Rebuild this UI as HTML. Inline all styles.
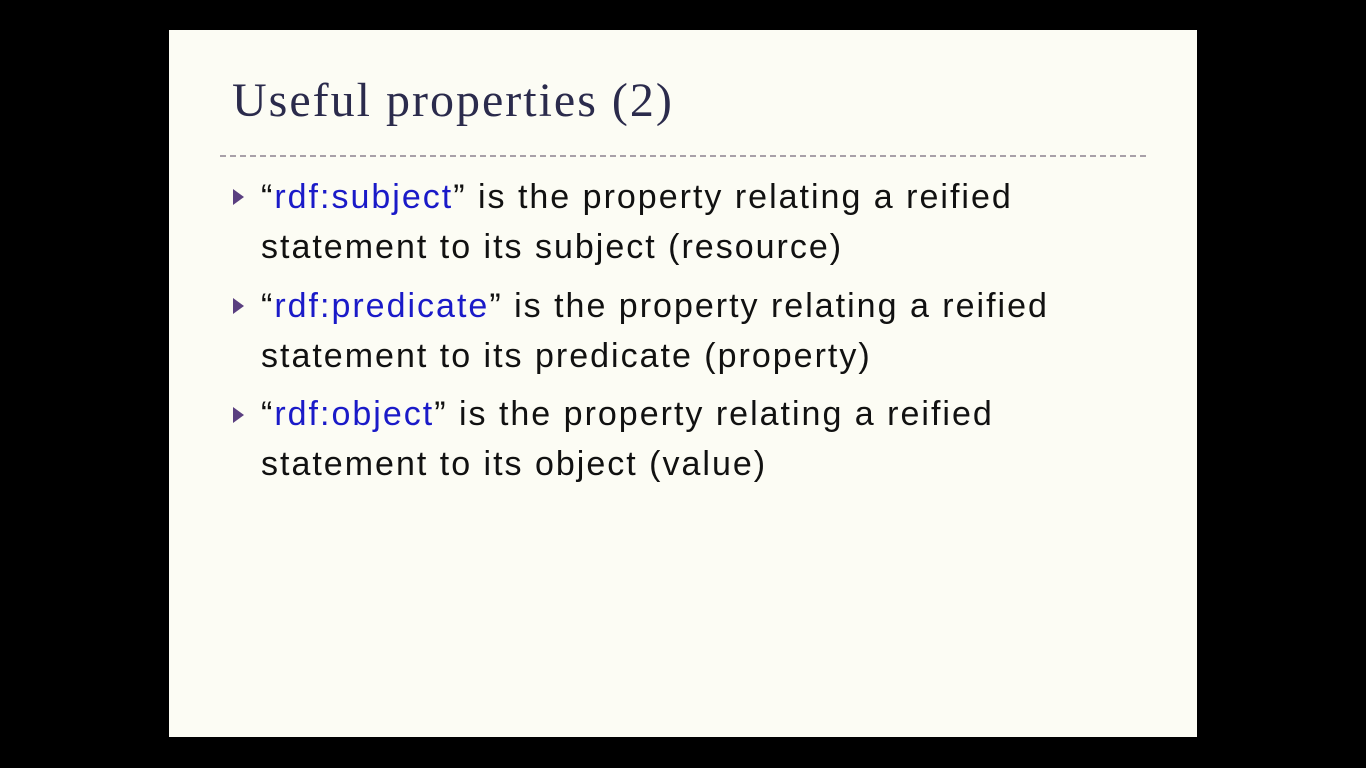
<!DOCTYPE html>
<html><head><style>
body{margin:0;width:1366px;height:768px;background:#000;position:relative;overflow:hidden}
.slide{position:absolute;left:169px;top:30px;width:1028px;height:707px;background:#fcfcf4}
.title{position:absolute;left:63px;top:43px;font-family:"Liberation Serif",serif;font-size:48px;color:#2b2b4c;letter-spacing:2px;white-space:nowrap}
.rule{position:absolute;left:51px;top:125px;width:926px;border-top:2px dashed #a8a0a8}
.b{position:absolute;left:92px;font-family:"Liberation Sans",sans-serif;font-size:34px;letter-spacing:2px;color:#111;line-height:50px;white-space:nowrap}
.b span{color:#1a1ac8}
.tri{position:absolute;left:64px;width:0;height:0;border-left:11px solid #5a3f80;border-top:8px solid transparent;border-bottom:8px solid transparent}
</style></head><body>
<div class="slide">
<div class="title">Useful properties (2)</div>
<div class="rule"></div>
<div class="tri" style="top:159px"></div>
<div class="b" style="top:142px">“<span>rdf:subject</span>” is the property relating a reified<br>statement to its subject (resource)</div>
<div class="tri" style="top:268px"></div>
<div class="b" style="top:251px">“<span>rdf:predicate</span>” is the property relating a reified<br>statement to its predicate (property)</div>
<div class="tri" style="top:377px"></div>
<div class="b" style="top:359px">“<span>rdf:object</span>” is the property relating a reified<br>statement to its object (value)</div>
</div>
</body></html>
